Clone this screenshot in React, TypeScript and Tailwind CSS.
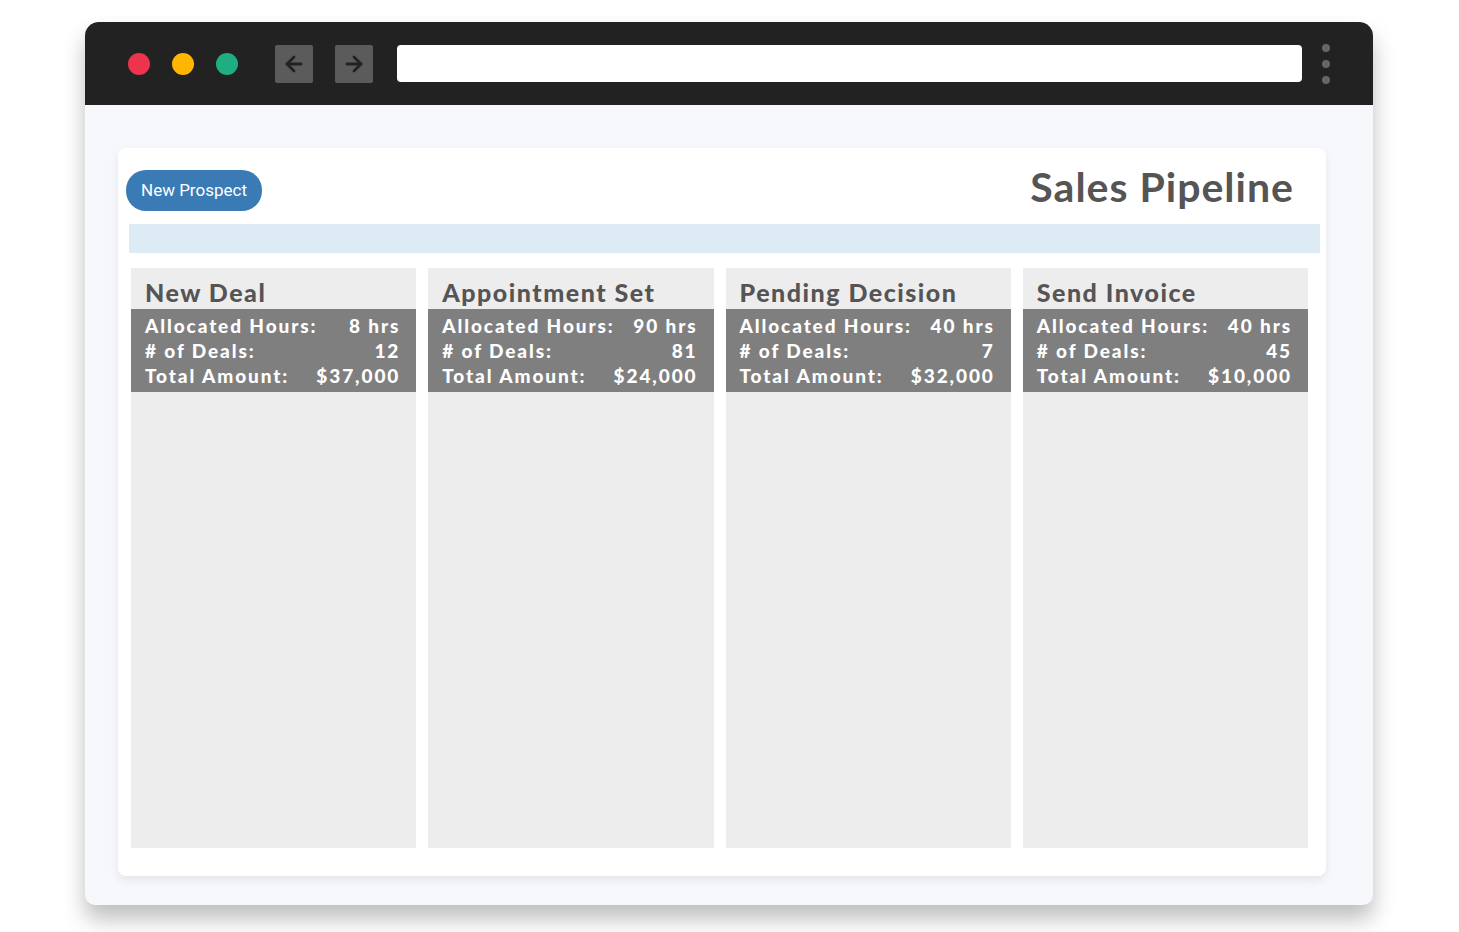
import { ArrowLeft, ArrowRight } from "lucide-react";

const stages = [
  { title: "New Deal", hours: "8 hrs", deals: "12", amount: "$37,000" },
  { title: "Appointment Set", hours: "90 hrs", deals: "81", amount: "$24,000" },
  { title: "Pending Decision", hours: "40 hrs", deals: "7", amount: "$32,000" },
  { title: "Send Invoice", hours: "40 hrs", deals: "45", amount: "$10,000" },
];

const futura = { fontFamily: "Lato, 'Open Sans', sans-serif" };

function StageColumn({ s }: { s: (typeof stages)[0] }) {
  return (
    <div className="flex h-[580px] flex-col bg-[#ededed]">
      <div
        className="flex h-[41px] items-end px-[14px] pb-[4px] text-[25px] font-black leading-none tracking-[1.5px] text-[#555]"
        style={futura}
      >
        {s.title}
      </div>
      <div
        className="flex h-[83px] flex-col justify-center bg-[#7f7f7f] pl-[14px] pr-[16px] text-[19px] font-black leading-[25px] tracking-[1.9px] text-white"
        style={futura}
      >
        <div className="flex justify-between">
          <span>Allocated Hours:</span>
          <span>{s.hours}</span>
        </div>
        <div className="flex justify-between">
          <span># of Deals:</span>
          <span>{s.deals}</span>
        </div>
        <div className="flex justify-between">
          <span>Total Amount:</span>
          <span>{s.amount}</span>
        </div>
      </div>
    </div>
  );
}

export default function App() {
  return (
    <div className="min-h-[932px] bg-white pl-[85px] pt-[22px]">
      <div className="w-[1288px] overflow-hidden rounded-t-[14px] rounded-b-[10px] bg-[#f7f8fc] shadow-[0_14px_22px_rgba(0,0,0,0.26)]">
        {/* Top bar */}
        <div className="flex h-[83px] items-center bg-[#222222] pl-[43px] pr-[43px]">
          <div className="flex items-center gap-[22px]">
            <span className="h-[22px] w-[22px] rounded-full bg-[#ed344d]" />
            <span className="h-[22px] w-[22px] rounded-full bg-[#feb603]" />
            <span className="h-[22px] w-[22px] rounded-full bg-[#1eae82]" />
          </div>
          <div className="ml-[37px] flex items-center gap-[22px]">
            <div className="flex h-[38px] w-[38px] items-center justify-center rounded-[2px] bg-[#5b5b5b]">
              <ArrowLeft size={24} strokeWidth={2.8} color="#222" />
            </div>
            <div className="flex h-[38px] w-[38px] items-center justify-center rounded-[2px] bg-[#5b5b5b]">
              <ArrowRight size={24} strokeWidth={2.8} color="#222" />
            </div>
          </div>
          <div className="ml-[24px] h-[37px] flex-1 rounded-[4px] bg-white" />
          <div className="ml-[20px] flex flex-col items-center gap-[8px]">
            <span className="h-[8px] w-[8px] rounded-full bg-[#666]" />
            <span className="h-[8px] w-[8px] rounded-full bg-[#666]" />
            <span className="h-[8px] w-[8px] rounded-full bg-[#666]" />
          </div>
        </div>

        {/* Body */}
        <div className="h-[800px] pl-[33px] pr-[47px] pt-[43px]">
          <div className="h-[728px] rounded-[8px] bg-white pt-[22px] shadow-[0_4px_10px_rgba(0,0,0,0.08)]">
            <div className="flex h-[41px] items-center justify-between pl-[8px] pr-[32px]">
              <button
                className="h-[41px] rounded-[20px] bg-[#3a7ab5] px-[15px] text-[17px] text-white"
                style={{ fontFamily: "Roboto, sans-serif" }}
              >
                New Prospect
              </button>
              <h1
                className="-mt-[8px] text-[41px] font-bold leading-none tracking-[1px] text-[#555]"
                style={futura}
              >
                Sales Pipeline
              </h1>
            </div>
            <div className="ml-[11px] mr-[6px] mt-[13px] h-[29px] bg-[#dcebf4]" />
            <div className="ml-[13px] mr-[18px] mt-[15px] grid grid-cols-4 gap-[12px]">
              {stages.map((s) => (
                <StageColumn key={s.title} s={s} />
              ))}
            </div>
          </div>
        </div>
      </div>
    </div>
  );
}
